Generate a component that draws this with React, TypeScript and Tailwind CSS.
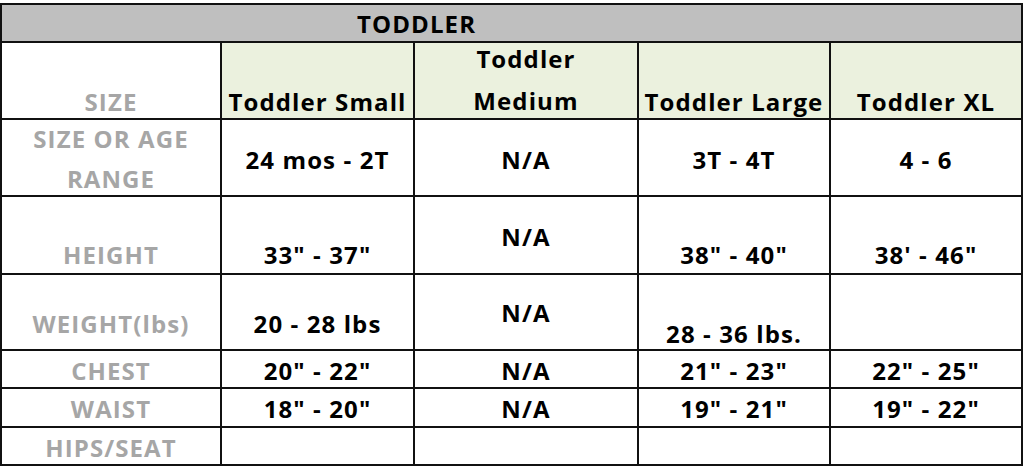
const font = "font-['Open_Sans',sans-serif] font-bold text-[24px] leading-[24px] tracking-[1.1px]";

type Cell = { text?: string; pb: number; label?: boolean };

const pbClass: Record<number, string> = {
  3: "pb-[3px]",
  4: "pb-[4px]",
  5: "pb-[5px]",
  6: "pb-[6px]",
  13: "pb-[13px]",
  23: "pb-[23px]",
  24: "pb-[24px]",
};

const rows: Cell[][] = [
  [
    { text: "SIZE OR AGE|RANGE", pb: 4, label: true },
    { text: "24 mos - 2T", pb: 23 },
    { text: "N/A", pb: 23 },
    { text: "3T - 4T", pb: 23 },
    { text: "4 - 6", pb: 23 },
  ],
  [
    { text: "HEIGHT", pb: 6, label: true },
    { text: "33\" - 37\"", pb: 6 },
    { text: "N/A", pb: 24 },
    { text: "38\" - 40\"", pb: 6 },
    { text: "38' - 46\"", pb: 6 },
  ],
  [
    { text: "WEIGHT(lbs)", pb: 13, label: true },
    { text: "20 - 28 lbs", pb: 13 },
    { text: "N/A", pb: 24 },
    { text: "28 - 36 lbs.", pb: 3 },
    { text: "", pb: 4 },
  ],
  [
    { text: "CHEST", pb: 4, label: true },
    { text: "20\" - 22\"", pb: 4 },
    { text: "N/A", pb: 4 },
    { text: "21\" - 23\"", pb: 4 },
    { text: "22\" - 25\"", pb: 4 },
  ],
  [
    { text: "WAIST", pb: 5, label: true },
    { text: "18\" - 20\"", pb: 5 },
    { text: "N/A", pb: 5 },
    { text: "19\" - 21\"", pb: 5 },
    { text: "19\" - 22\"", pb: 5 },
  ],
  [
    { text: "HIPS/SEAT", pb: 4, label: true },
    { text: "", pb: 4 },
    { text: "", pb: 4 },
    { text: "", pb: 4 },
    { text: "", pb: 4 },
  ],
];

function DataCell({ cell }: { cell: Cell }) {
  const parts = (cell.text ?? "").split("|");
  if (parts.length > 1) {
    return (
      <div className="flex flex-col items-center justify-between bg-white pt-[7px] pb-[4px] text-[#a6a6a6]">
        {parts.map((p) => (
          <span key={p}>{p}</span>
        ))}
      </div>
    );
  }
  return (
    <div
      className={
        "flex items-end justify-center bg-white whitespace-nowrap " +
        pbClass[cell.pb] +
        (cell.label ? " text-[#a6a6a6]" : " text-black")
      }
    >
      {cell.text}
    </div>
  );
}

export default function App() {
  return (
    <div className="h-[470px] w-[1024px] bg-white pt-[3px]">
      <div
        className={
          "grid w-[1023px] grid-cols-[218px_191px_222px_190px_190px] grid-rows-[36px_75px_75px_76px_74px_36px_37px_36px] gap-[2px] bg-[#111] p-[2px] " +
          font
        }
      >
        <div className="col-span-5 flex items-end bg-[#bfbfbf] pb-[5px] pl-[355px] text-black">
          TODDLER
        </div>

        <div className="flex items-end justify-center bg-white pb-[4px] text-[#a6a6a6]">SIZE</div>
        <div className="flex items-end justify-center bg-[#ebf1de] pb-[4px] whitespace-nowrap">Toddler Small</div>
        <div className="flex flex-col items-center justify-between bg-[#ebf1de] pt-[4px] pb-[5px]">
          <span>Toddler</span>
          <span>Medium</span>
        </div>
        <div className="flex items-end justify-center bg-[#ebf1de] pb-[4px] whitespace-nowrap">Toddler Large</div>
        <div className="flex items-end justify-center bg-[#ebf1de] pb-[4px] whitespace-nowrap">Toddler XL</div>

        {rows.map((row, i) => row.map((cell, j) => <DataCell key={i + "-" + j} cell={cell} />))}
      </div>
    </div>
  );
}
